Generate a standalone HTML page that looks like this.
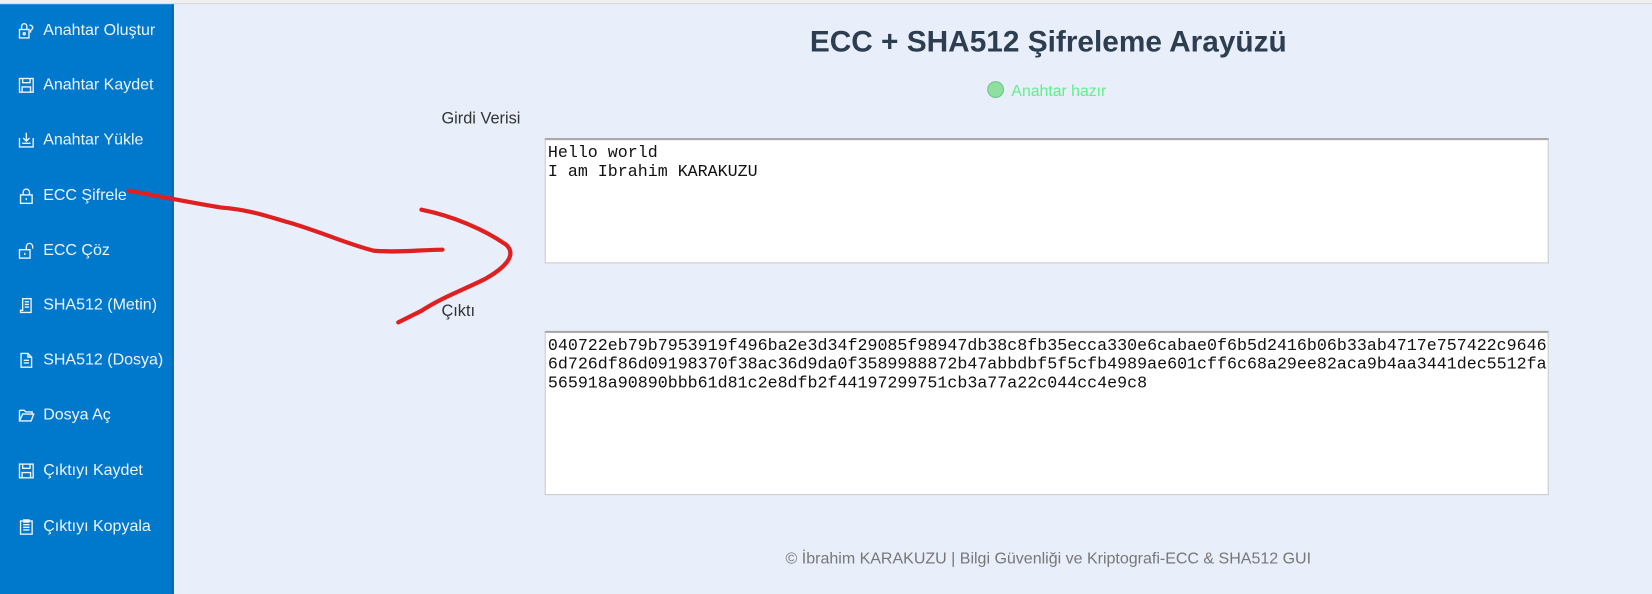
<!DOCTYPE html>
<html><head><meta charset="utf-8"><style>
*{margin:0;padding:0;box-sizing:border-box}
body{width:1652px;height:552px;overflow:hidden;background:#e8eefa;font-family:"Liberation Sans",sans-serif;position:relative}
.wrap{position:absolute;left:0;top:0;width:1568px;height:540px;transform:scale(1.05357);transform-origin:0 0}
.top{position:absolute;left:0;top:0;width:1568px;height:4px;background:#f0f0f0;border-bottom:1px solid #d8d8d8}
.side{position:absolute;left:0;top:4px;width:165px;height:560px;background:#0078cc;border-right:2px solid #0a64a8}
.it{position:absolute;left:17px;color:#eef4fb;font-size:15.2px;height:20px;line-height:20px;white-space:nowrap}
.it svg{position:absolute;left:0;top:2px}
.it span{position:absolute;left:24px;top:0}
h1{position:absolute;left:650px;width:690px;text-align:center;top:23px;font-size:28.3px;font-weight:bold;color:#2c3e50}
.st{position:absolute;left:937px;top:77px;font-size:15px;color:#5ef08a}
.st i{display:inline-block;width:16px;height:16px;border-radius:50%;background:#8ee0a0;border:1px solid #6cc488;vertical-align:-2px;margin-right:7px}
.lbl{position:absolute;font-size:15.5px;color:#333}
.ta{position:absolute;left:517px;width:953px;background:#fff;border:1px solid #c8c8c8;border-top:2px solid #a8a8a8;font-family:"Liberation Mono",monospace;font-size:15.8px;line-height:18px;padding:3px 2px;color:#111;white-space:pre;overflow:hidden}
.ft{position:absolute;left:650px;width:690px;text-align:center;top:522px;font-size:15.2px;color:#777}
</style></head><body>
<div class="wrap">
<div class="top"></div>
<div class="side">
<div class="it" style="top:15px"><svg width="16" height="16" viewBox="0 0 16 16" fill="none" stroke="#eef4fb" stroke-width="1.3"><rect x="1.5" y="7" width="9" height="8"/><path d="M3.5 7V4a2.5 2.5 0 0 1 5 0v3M11 3a2.5 2.5 0 0 1 3 3l-2 2v2"/><circle cx="6" cy="11" r="1"/></svg><span>Anahtar Oluştur</span></div>
<div class="it" style="top:67px"><svg width="16" height="16" viewBox="0 0 16 16" fill="none" stroke="#eef4fb" stroke-width="1.3"><rect x="1.5" y="1.5" width="13" height="13"/><path d="M4.5 1.5v4h7v-4M4 14.5v-5h8v5"/></svg><span>Anahtar Kaydet</span></div>
<div class="it" style="top:119px"><svg width="16" height="16" viewBox="0 0 16 16" fill="none" stroke="#eef4fb" stroke-width="1.3"><path d="M1.5 6v8.5h13V6M8 1v8M5 6l3 3 3-3M4 11h8"/></svg><span>Anahtar Yükle</span></div>
<div class="it" style="top:172px"><svg width="16" height="16" viewBox="0 0 16 16" fill="none" stroke="#eef4fb" stroke-width="1.3"><rect x="2.5" y="7" width="11" height="8"/><path d="M5 7V4.5a3 3 0 0 1 6 0V7M8 10v2"/></svg><span>ECC Şifrele</span></div>
<div class="it" style="top:224px"><svg width="16" height="16" viewBox="0 0 16 16" fill="none" stroke="#eef4fb" stroke-width="1.3"><rect x="1.5" y="7" width="10" height="8"/><path d="M8 7V4a3 3 0 0 1 6 0v2M6.5 10v2"/></svg><span>ECC Çöz</span></div>
<div class="it" style="top:276px"><svg width="16" height="16" viewBox="0 0 16 16" fill="none" stroke="#eef4fb" stroke-width="1.3"><path d="M4.5 1.5h8v13h-10v-2h2zM6.5 4.5h4M6.5 7h4M6.5 9.5h4"/></svg><span>SHA512 (Metin)</span></div>
<div class="it" style="top:328px"><svg width="16" height="16" viewBox="0 0 16 16" fill="none" stroke="#eef4fb" stroke-width="1.3"><path d="M3 1.5h6.5l3.5 3.5v9.5H3zM9.5 1.5V5h3.5M5.5 8h5M5.5 10.5h5"/></svg><span>SHA512 (Dosya)</span></div>
<div class="it" style="top:380px"><svg width="16" height="16" viewBox="0 0 16 16" fill="none" stroke="#eef4fb" stroke-width="1.3"><path d="M1.5 3.5h4.5l1.5 1.5h6v2M1.5 3.5v10h11l2.5-6.5H4.5L1.5 13.5"/></svg><span>Dosya Aç</span></div>
<div class="it" style="top:433px"><svg width="16" height="16" viewBox="0 0 16 16" fill="none" stroke="#eef4fb" stroke-width="1.3"><rect x="1.5" y="1.5" width="13" height="13"/><path d="M4.5 1.5v4h7v-4M4 14.5v-5h8v5"/></svg><span>Çıktıyı Kaydet</span></div>
<div class="it" style="top:486px"><svg width="16" height="16" viewBox="0 0 16 16" fill="none" stroke="#eef4fb" stroke-width="1.3"><rect x="2.5" y="2.5" width="11" height="12.5"/><path d="M5.5 1.5h5v2h-5zM5 6h6M5 8.5h6M5 11h6"/></svg><span>Çıktıyı Kopyala</span></div>
</div>
<h1>ECC + SHA512 Şifreleme Arayüzü</h1>
<div class="st"><i></i>Anahtar hazır</div>
<div class="lbl" style="left:419px;top:104px">Girdi Verisi</div>
<div class="ta" style="top:131px;height:119px">Hello world
I am Ibrahim KARAKUZU</div>
<div class="lbl" style="left:419px;top:287px">Çıktı</div>
<div class="ta" style="top:314px;height:156px">040722eb79b7953919f496ba2e3d34f29085f98947db38c8fb35ecca330e6cabae0f6b5d2416b06b33ab4717e757422c9646
6d726df86d09198370f38ac36d9da0f3589988872b47abbdbf5f5cfb4989ae601cff6c68a29ee82aca9b4aa3441dec5512fa
565918a90890bbb61d81c2e8dfb2f44197299751cb3a77a22c044cc4e9c8</div>
<div class="ft">© İbrahim KARAKUZU | Bilgi Güvenliği ve Kriptografi-ECC &amp; SHA512 GUI</div>
<svg style="position:absolute;left:0;top:0" width="1568" height="540" fill="none" stroke="#e02020" stroke-width="4" stroke-linecap="round" stroke-linejoin="round">
<path d="M122 181 C160 188 190 194 210 197 C235 199 250 204 270 210 C300 218 330 232 355 238 C380 240 400 237 420 237"/>
<path d="M400 199 C430 205 460 218 480 232 C492 242 478 255 460 265 C440 275 420 282 400 295 L378 306"/>
</svg>
</div>
</body></html>
